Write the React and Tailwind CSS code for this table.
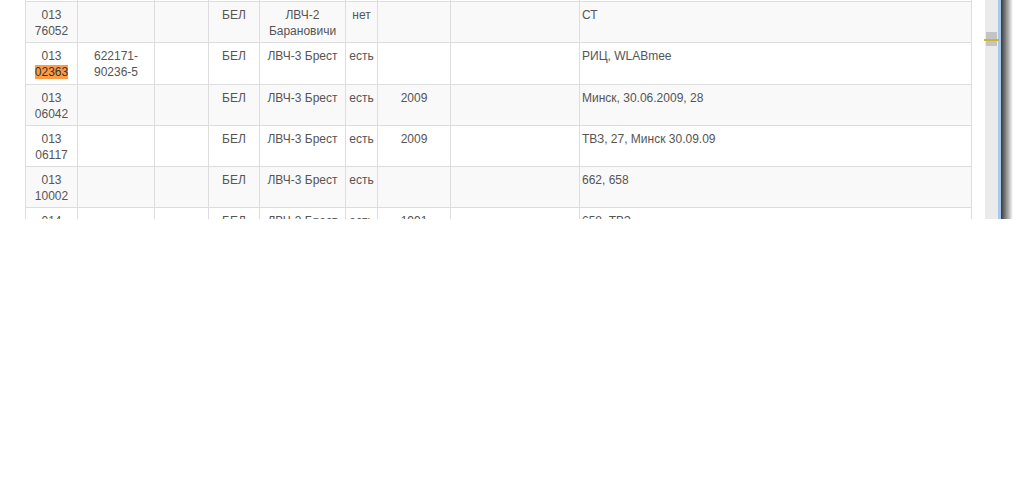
import React from "react";

const COLS =
  "grid grid-cols-[52px_77px_54px_51px_86px_32px_73px_129px_392px]";

const rows = [
  { bg: "bg-[#f9f9f9]", c: [["013", "76052"], null, null, "БЕЛ", ["ЛВЧ-2", "Барановичи"], "нет", "", "", "СТ"] },
  { bg: "bg-white", c: [["013", "HL"], ["622171-", "90236-5"], null, "БЕЛ", "ЛВЧ-3 Брест", "есть", "", "", "РИЦ, WLABmee"] },
  { bg: "bg-[#f9f9f9]", c: [["013", "06042"], null, null, "БЕЛ", "ЛВЧ-3 Брест", "есть", "2009", "", "Минск, 30.06.2009, 28"] },
  { bg: "bg-white", c: [["013", "06117"], null, null, "БЕЛ", "ЛВЧ-3 Брест", "есть", "2009", "", "ТВЗ, 27, Минск 30.09.09"] },
  { bg: "bg-[#f9f9f9]", c: [["013", "10002"], null, null, "БЕЛ", "ЛВЧ-3 Брест", "есть", "", "", "662, 658"] },
  { bg: "bg-white", c: [["014", "13250"], null, null, "БЕЛ", "ЛВЧ-3 Брест", "есть", "1991", "", "658, ТВЗ"] },
];

function Content({ v }) {
  if (!v) return null;
  if (Array.isArray(v)) {
    return (
      <>
        <div>{v[0]}</div>
        <div>
          {v[1] === "HL" ? (
            <span className="bg-[#ff9b45] text-[#333333]">02363</span>
          ) : (
            v[1]
          )}
        </div>
      </>
    );
  }
  return <div>{v}</div>;
}

export default function App() {
  return (
    <div
      className="w-[1024px] h-[486px] bg-white overflow-hidden text-[12px] leading-[16px] text-[#555555]"
      style={{ fontFamily: '"Liberation Sans", Arial, sans-serif' }}
    >
      <div className="flex h-[219px] overflow-hidden">
        <div className="w-[985px] pl-[25px]">
          <div className="w-[947px] border-l border-[#dddddd]">
            <div className={`${COLS} h-[2px] border-b border-[#dddddd]`}>
              {Array.from({ length: 9 }).map((_, i) => (
                <div key={i} className="border-r border-[#dddddd]" />
              ))}
            </div>
            {rows.map((r, ri) => (
              <div
                key={ri}
                className={`${COLS} h-[41.25px] border-b border-[#dddddd] ${r.bg}`}
              >
                {r.c.map((v, ci) => (
                  <div
                    key={ci}
                    className={`border-r border-[#dddddd] pt-[5px] px-[2px] whitespace-nowrap overflow-hidden ${
                      ci === 8 ? "text-left" : "text-center"
                    }`}
                  >
                    <Content v={v} />
                  </div>
                ))}
              </div>
            ))}
          </div>
        </div>
        <div className="relative w-[13px] bg-[#ebebeb]">
          <div className="ml-[1px] mt-[32px] h-[14px] w-[11px] bg-[#c4c4c4]" />
          <div className="absolute left-[-1px] top-[39px] h-[2px] w-[15px] bg-[#cfb52c]" />
        </div>
        <div className="w-[3px] bg-[#a8c8ee]" />
        <div className="w-[12px] bg-gradient-to-r from-[#3a3a3a] via-[#9a9a9a] to-white" />
        <div className="flex-1 bg-white" />
      </div>
    </div>
  );
}
